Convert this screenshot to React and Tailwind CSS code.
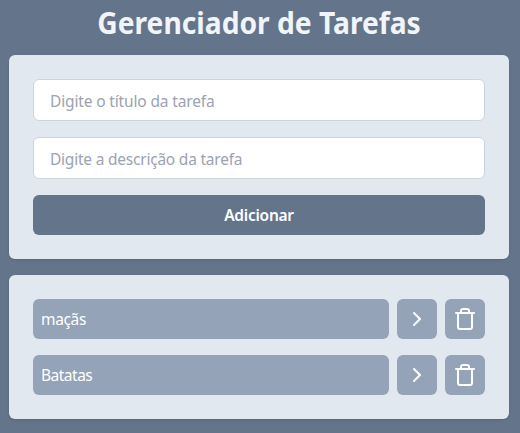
import { ChevronRight } from "lucide-react";

const tasks = [
  { title: "maçãs", tracking: "tracking-[-0.35px]" },
  { title: "Batatas", tracking: "tracking-[-0.5px]" },
];

const fieldClass =
  "h-[42px] rounded-md border border-[#cbd5e1] bg-white px-4 pt-px text-[15.5px] placeholder:text-[#9ca3af]";

function TrashIcon() {
  return (
    <svg
      width="24"
      height="24"
      viewBox="0 0 24 24"
      fill="none"
      stroke="currentColor"
      strokeWidth="2"
      strokeLinecap="round"
      strokeLinejoin="round"
    >
      <path d="M3 6h18" />
      <path d="M19 6v14c0 1-1 2-2 2H7c-1 0-2-1-2-2V6" />
      <path d="M8 6V4c0-1 1-2 2-2h4c1 0 2 1 2 2v2" />
    </svg>
  );
}

function IconButton({ label, children }) {
  return (
    <button
      aria-label={label}
      className="flex size-10 shrink-0 items-center justify-center rounded-md bg-[#94a3b8] text-white"
    >
      {children}
    </button>
  );
}

export default function App() {
  return (
    <div className="h-[433px] overflow-hidden bg-[#64748b] pl-[9px] pr-[11px] pt-[5px] font-['Noto_Sans',sans-serif]">
      <div className="flex flex-col gap-4">
        <h1 className="-mb-[2px] h-9 text-center text-[30px] leading-9 font-bold text-[#f1f5f9]">
          <span className="inline-block origin-center scale-x-[0.94]">Gerenciador de Tarefas</span>
        </h1>
        <section className="flex flex-col gap-4 rounded-md bg-[#e2e8f0] p-6 shadow">
          <input className={`${fieldClass} tracking-[-0.15px]`} placeholder="Digite o título da tarefa" />
          <input className={`${fieldClass} tracking-[-0.22px]`} placeholder="Digite a descrição da tarefa" />
          <button className="h-10 rounded-md bg-[#64748b] pt-0.5 text-[15.5px] font-semibold tracking-[-0.25px] text-white">
            Adicionar
          </button>
        </section>
        <ul className="flex flex-col gap-4 rounded-md bg-[#e2e8f0] p-6 shadow">
          {tasks.map((t) => (
            <li key={t.title} className="flex gap-2">
              <button
                className={`h-10 flex-1 rounded-md bg-[#94a3b8] px-2 pt-0.5 text-left text-[15.5px] text-white ${t.tracking}`}
              >
                {t.title}
              </button>
              <IconButton label="Ver detalhes"><ChevronRight size={24} /></IconButton>
              <IconButton label="Excluir"><TrashIcon /></IconButton>
            </li>
          ))}
        </ul>
      </div>
    </div>
  );
}
